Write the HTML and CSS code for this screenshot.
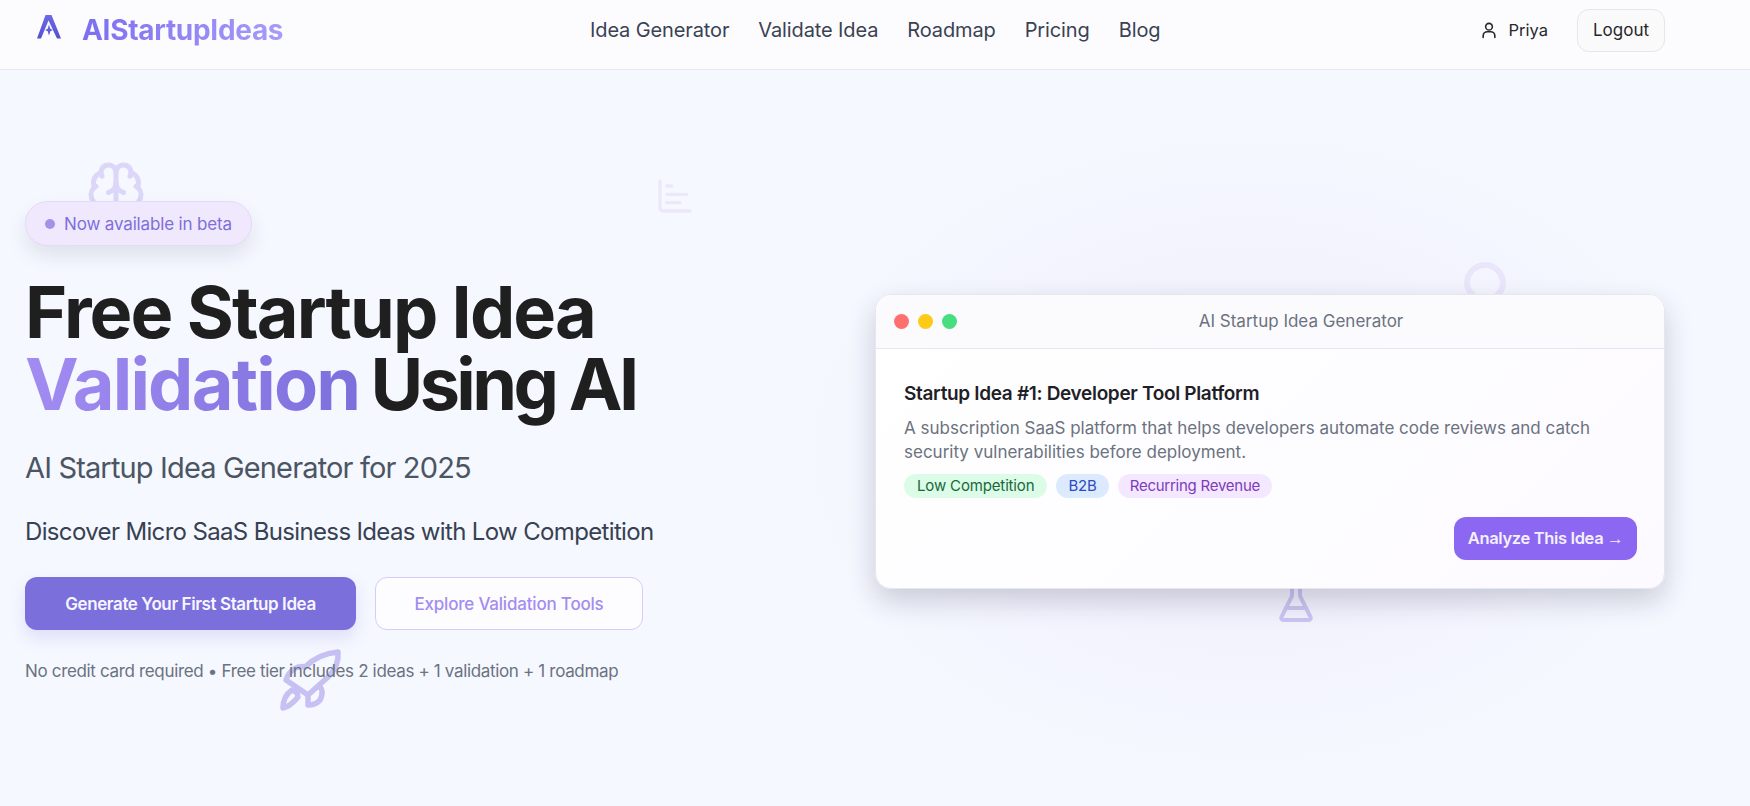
FILE: index.html
```html
<!DOCTYPE html>
<html lang="en">
<head>
    <meta charset="UTF-8">
    <meta name="viewport" content="width=device-width, initial-scale=1.0">
    <title>AIStartupIdeas</title>
    <link rel="stylesheet" href="styles.css">
</head>
<body>
    <header class="site-header">
        <a class="logo" href="#">
            <svg class="logo-icon" viewBox="0 0 28 28">
                <defs>
                    <linearGradient id="logoFill" x1="0" y1="0" x2="0" y2="1">
                        <stop offset="0" stop-color="#6d6ae8"/>
                        <stop offset="1" stop-color="#5450cf"/>
                    </linearGradient>
                </defs>
                <path d="M2 26.500 L10.500 3 H16.500 L26 26.500 H22 L13.500 8.500 L6 26.500 Z" fill="url(#logoFill)"/>
                <path d="M14 12.500 L15.300 16.700 L18 18 L15.300 19.300 L14 23.500 L12.700 19.300 L10 18 L12.700 16.700 Z" fill="url(#logoFill)"/>
            </svg>
            <span class="logo-text">AIStartupIdeas</span>
        </a>
        <nav class="main-nav">
            <a href="#">Idea Generator</a>
            <a href="#">Validate Idea</a>
            <a href="#">Roadmap</a>
            <a href="#">Pricing</a>
            <a href="#">Blog</a>
        </nav>
        <div class="user-area">
            <svg class="user-icon" viewBox="0 0 24 24">
                <circle cx="12" cy="8" r="4"/>
                <path d="M5 21v-2a5 5 0 0 1 5-5h4a5 5 0 0 1 5 5v2"/>
            </svg>
            <span class="user-name">Priya</span>
            <button class="btn-logout">Logout</button>
        </div>
    </header>

    <main class="hero">
        <div class="blob"></div>

        <!-- floating icons behind the hero -->
        <svg class="float-icon icon-brain" viewBox="0 0 24 24">
            <path d="M12 18V5"/>
            <path d="M15 13a4.170 4.170 0 0 1-3-4 4.170 4.170 0 0 1-3 4"/>
            <path d="M17.598 6.500A3 3 0 1 0 12 5a3 3 0 1 0-5.598 1.500"/>
            <path d="M17.997 5.125a4 4 0 0 1 2.526 5.770"/>
            <path d="M18 18a4 4 0 0 0 2-7.464"/>
            <path d="M19.967 17.483A4 4 0 1 1 12 18a4 4 0 1 1-7.967-.517"/>
            <path d="M6 18a4 4 0 0 1-2-7.464"/>
            <path d="M6.003 5.125a4 4 0 0 0-2.526 5.770"/>
        </svg>
        <svg class="float-icon icon-chart" viewBox="0 0 24 24">
            <path d="M3 3v16a2 2 0 0 0 2 2h16"/>
            <path d="M7 16h8"/>
            <path d="M7 11h12"/>
            <path d="M7 6h3"/>
        </svg>
        <svg class="float-icon icon-bulb" viewBox="0 0 24 24">
            <path d="M15 14c.2-1 .7-1.700 1.500-2.500 1-.9 1.500-2.200 1.500-3.500A6 6 0 0 0 6 8c0 1 .2 2.200 1.500 3.500.7.7 1.300 1.500 1.500 2.500"/>
        </svg>
        <svg class="float-icon icon-flask" viewBox="0 0 24 24">
            <path d="M10 2v7.527a2 2 0 0 1-.211.896L4.720 20.550a1 1 0 0 0 .9 1.450h12.760a1 1 0 0 0 .9-1.450l-5.069-10.127A2 2 0 0 1 14 9.527V2"/>
            <path d="M8.500 2h7"/>
            <path d="M7 16h10"/>
        </svg>
        <svg class="float-icon icon-rocket" viewBox="0 0 64 64">
            <path d="M58 4C59 14 55 22 48 29L28 47 6 32C9 22 18 17 25 19 35 9 47 5 58 4Z"/>
            <path d="M38 39C43 38 43 47 40 52 37 56 32 57 28 57 28 53 28 50 28 47"/>
            <path d="M12 42C16 43 18 46 18 49 14 54 8 59 3 60 3 53 6 46 12 42Z"/>
        </svg>

        <section class="hero-left">
            <div class="badge"><span class="badge-dot"></span>Now available in beta</div>
            <h1>Free Startup Idea<br><span class="accent">Validation</span> <span class="rest">Using AI</span></h1>
            <h2 class="subtitle">AI Startup Idea Generator for 2025</h2>
            <p class="tagline">Discover Micro SaaS Business Ideas with Low Competition</p>
            <div class="cta-row">
                <a class="btn btn-primary" href="#">Generate Your First Startup Idea</a>
                <a class="btn btn-secondary" href="#">Explore Validation Tools</a>
            </div>
            <p class="note">No credit card required • Free tier includes 2 ideas + 1 validation + 1 roadmap</p>
        </section>

        <section class="hero-right">
            <div class="demo-card">
                <div class="demo-bar">
                    <span class="dot dot-red"></span>
                    <span class="dot dot-yellow"></span>
                    <span class="dot dot-green"></span>
                    <span class="demo-title">AI Startup Idea Generator</span>
                </div>
                <div class="demo-body">
                    <h3>Startup Idea #1: Developer Tool Platform</h3>
                    <p>A subscription SaaS platform that helps developers automate code reviews and catch security vulnerabilities before deployment.</p>
                    <div class="tags">
                        <span class="tag tag-green">Low Competition</span>
                        <span class="tag tag-blue">B2B</span>
                        <span class="tag tag-purple">Recurring Revenue</span>
                    </div>
                    <div class="demo-actions">
                        <button class="btn-analyze">Analyze This Idea <span class="arrow">→</span></button>
                    </div>
                </div>
            </div>
        </section>
    </main>
</body>
</html>
```

FILE: styles.css
```css
* {
    box-sizing: border-box;
}
html, body {
    height: 100%;
}
body {
    font-family: Inter, "Open Sans", sans-serif;
    margin: 0;
    background-color: #f5f8ff;
    color: #1f1f1f;
    overflow: hidden;
}
a {
    text-decoration: none;
    color: inherit;
}

/* header */
.site-header {
    height: 70px;
    display: flex;
    align-items: center;
    justify-content: space-between;
    padding: 0 85px 9px 35px;
    background: #fcfcff;
    border-bottom: 1px solid #e6e7ee;
}
.logo {
    display: flex;
    align-items: center;
    gap: 19px;
    width: 555px;
}
.logo-icon {
    width: 28px;
    height: 28px;
    margin-top: -8px;
}
.logo-text {
    font-size: 28px;
    font-weight: 700;
    letter-spacing: -0.3px;
    background: linear-gradient(90deg, #7c6ff0, #a79bfa);
    -webkit-background-clip: text;
    background-clip: text;
    color: transparent;
}
.main-nav {
    display: flex;
    gap: 29px;
    font-size: 20px;
    color: #3a4252;
    letter-spacing: -0.120px;
}
.user-area {
    display: flex;
    align-items: center;
    margin-left: auto;
}
.user-icon {
    width: 20px;
    height: 20px;
    fill: none;
    stroke: #27272a;
    stroke-width: 1.900;
    stroke-linecap: round;
    stroke-linejoin: round;
}
.user-name {
    font-size: 16.500px;
    margin-left: 10px;
    color: #27272a;
}
.btn-logout {
    margin-left: 29px;
    width: 88px;
    height: 43px;
    font: inherit;
    font-size: 17px;
    color: #27272a;
    background: #fafafa;
    border: 1px solid #e6e6ea;
    border-radius: 12px;
}

/* hero */
.hero {
    position: relative;
    height: 736px;
    display: grid;
    grid-template-columns: 850px 790px;
    align-items: center;
    padding: 0 85px 0 25px;
}
.hero-left, .hero-right {
    position: relative;
    z-index: 2;
}
.hero-left {
    margin-top: 8px;
}
.hero-right {
    margin-top: 6px;
}
.blob {
    position: absolute;
    left: 800px;
    top: 60px;
    width: 900px;
    height: 640px;
    background: radial-gradient(closest-side, #f1f0fd 35%, rgba(241, 240, 253, 0) 100%);
}
.float-icon {
    position: absolute;
    z-index: 1;
    fill: none;
    stroke-width: 2;
    stroke-linecap: round;
    stroke-linejoin: round;
}
.icon-brain {
    left: 86px;
    top: 90px;
    width: 60px;
    height: 60px;
    stroke: #dcd6f9;
}
.icon-chart {
    left: 655px;
    top: 106px;
    width: 40px;
    height: 40px;
    stroke: #ebe8fb;
}
.icon-bulb {
    left: 1449px;
    top: 189px;
    width: 72px;
    height: 72px;
    stroke: #e9e6fb;
}
.icon-flask {
    left: 1272px;
    top: 506px;
    width: 48px;
    height: 48px;
    stroke: #cbc5f2;
}
.icon-rocket {
    left: 280px;
    top: 578px;
    width: 64px;
    height: 64px;
    stroke: #c6c0f3;
    stroke-width: 5.500;
}

/* left column */
.badge {
    display: inline-flex;
    align-items: center;
    gap: 7px;
    height: 45px;
    padding: 0 19px;
    font-size: 17px;
    letter-spacing: -0.150px;
    color: #7c6fdc;
    background: #f0e8fd;
    border: 1px solid #e6d9fa;
    border-radius: 23px;
    box-shadow: 0 10px 20px rgba(30, 30, 60, 0.1);
}
.badge-dot {
    width: 10px;
    height: 10px;
    border-radius: 50%;
    margin-right: 2px;
    background: #a094ea;
}
h1 {
    margin: 30px 0 0;
    font-size: 72px;
    line-height: 72px;
    font-weight: 700;
    letter-spacing: -1.900px;
    color: #1f1f1f;
}
.accent {
    display: inline-block;
    letter-spacing: -1.800px;
    background: linear-gradient(90deg, #a28cf2, #7c6fdc);
    -webkit-background-clip: text;
    background-clip: text;
    color: transparent;
}
.rest {
    margin-left: -4px;
    letter-spacing: -3.600px;
}
.subtitle {
    margin: 29px 0 0;
    font-size: 29px;
    line-height: 38px;
    font-weight: 400;
    letter-spacing: -0.850px;
    color: #4b5563;
}
.tagline {
    margin: 29px 0 0;
    font-size: 24px;
    line-height: 32px;
    letter-spacing: -0.650px;
    color: #374151;
}
.cta-row {
    display: flex;
    gap: 19px;
    margin-top: 29px;
}
.btn {
    display: flex;
    align-items: center;
    justify-content: center;
    height: 53px;
    border-radius: 12px;
    font-size: 17px;
    font-weight: 600;
    letter-spacing: -0.4px;
}
.btn-primary {
    width: 331px;
    color: #f7f5ff;
    background: #7b6fdc;
    box-shadow: 0 8px 16px rgba(123, 111, 220, 0.18);
}
.btn-secondary {
    width: 268px;
    font-weight: 500;
    letter-spacing: -0.2px;
    color: #a48cf0;
    background: #fdfcff;
    border: 1px solid #d5ccf8;
}
.note {
    margin: 29px 0 0;
    font-size: 17px;
    line-height: 24px;
    letter-spacing: -0.340px;
    color: #6b7280;
}

/* demo card */
.demo-card {
    height: 295px;
    border: 1px solid #e6e7ee;
    border-radius: 16px;
    background: linear-gradient(135deg, #ffffff, #fcfaff);
    box-shadow: 0 12px 28px rgba(30, 30, 60, 0.2);
    overflow: hidden;
}
.demo-bar {
    display: flex;
    align-items: center;
    gap: 9px;
    height: 54px;
    padding: 0 18px;
    background: #fbfbfd;
    border-bottom: 1px solid #e6e7ee;
}
.dot {
    width: 15px;
    height: 15px;
    border-radius: 50%;
}
.dot-red {
    background: #ff6f6f;
}
.dot-yellow {
    background: #fdcb17;
}
.dot-green {
    background: #47de80;
}
.demo-title {
    flex: 1;
    text-align: center;
    font-size: 17px;
    color: #6b7280;
    padding-right: 10px;
}
.demo-body {
    padding: 33px 27px 0 28px;
}
.demo-body h3 {
    margin: 0;
    font-size: 19px;
    line-height: 24px;
    font-weight: 600;
    letter-spacing: -0.330px;
    color: #1f1f27;
}
.demo-body p {
    margin: 10px 0 0;
    font-size: 17px;
    line-height: 24px;
    color: #6b7280;
}
.tags {
    display: flex;
    gap: 9px;
    margin-top: 10px;
}
.tag {
    display: flex;
    align-items: center;
    height: 24px;
    padding: 0 12px;
    border-radius: 12px;
    font-size: 15px;
    letter-spacing: -0.150px;
}
.tag-green {
    padding: 0 13px;
    color: #17693c;
    background: #dcfce7;
}
.tag-blue {
    color: #2f4bbd;
    background: #dbeafe;
}
.tag-purple {
    letter-spacing: -0.250px;
    color: #7e3bbd;
    background: #f3e8ff;
}
.demo-actions {
    display: flex;
    justify-content: flex-end;
    margin-top: 19px;
}
.btn-analyze {
    width: 183px;
    height: 43px;
    border: none;
    border-radius: 12px;
    font: inherit;
    font-size: 16.500px;
    font-weight: 600;
    letter-spacing: -0.350px;
    color: #f5f0ff;
    background: #8b67f2;
}
.arrow {
    font-family: "Liberation Sans", sans-serif;
    font-weight: 400;
}
```
